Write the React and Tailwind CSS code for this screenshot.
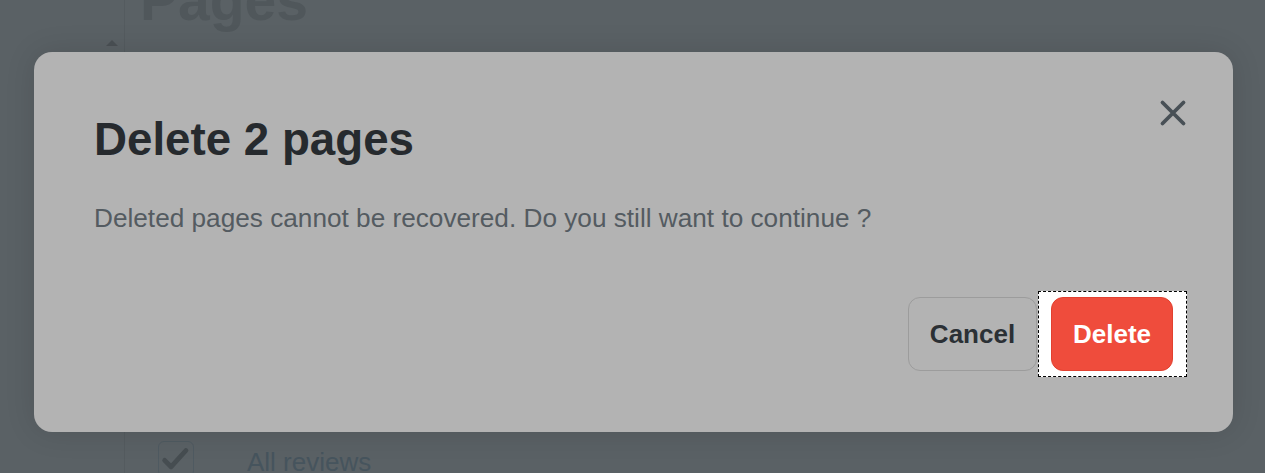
import React from "react";

export default function App() {
    return (
        <div
            className="relative w-full h-[473px] overflow-hidden bg-[#5a6165]"
            style={{ fontFamily: '"Liberation Sans", Arial, sans-serif' }}
        >
            {/* dimmed page behind the dialog */}
            <div className="flex h-full">
                <div className="w-[125px] shrink-0 border-r border-[#545b5f] relative">
                    <div className="absolute left-[106px] top-[40px] w-0 h-0 border-l-[6px] border-r-[6px] border-b-[6px] border-l-transparent border-r-transparent border-b-[#4a5054]"></div>
                </div>
                <div className="flex-1 flex flex-col justify-between pl-[15px]">
                    <h1 className="text-[57px] font-bold leading-[57px] text-[#50575b] -mt-[28px]">
                        Pages
                    </h1>
                    <div className="flex items-start gap-[53px] pl-[18px] -mb-[4px]">
                        <div className="w-[36px] h-[36px] rounded-[6px] border border-[#4f5a61] flex items-center justify-center">
                            <svg width="34" height="34" viewBox="0 0 24 24" fill="none" stroke="#464d51" strokeWidth="3.4" strokeLinecap="round" strokeLinejoin="round">
                                <path d="M4 13l4.5 4.5L19 6" />
                            </svg>
                        </div>
                        <span className="text-[26px] text-[#46545d] leading-[26px] mt-[8px]">All reviews</span>
                    </div>
                </div>
            </div>

            {/* dialog */}
            <div className="absolute left-[34px] top-[52px] w-[1199px] h-[380px] rounded-[18px] bg-[#b3b3b3] shadow-[0_0_30px_rgba(0,0,0,0.12)] pl-[60px] pr-[46px] pt-[65px] flex flex-col">
                <button className="absolute right-[46px] top-[47px] w-[28px] h-[28px] flex items-center justify-center">
                    <svg width="28" height="28" viewBox="0 0 28 28" fill="none" stroke="#485056" strokeWidth="3.8" strokeLinecap="round">
                        <path d="M3.5 3.5L24.5 24.5M24.5 3.5L3.5 24.5" />
                    </svg>
                </button>
                <h2 className="text-[45.7px] font-bold leading-[45px] text-[#262a2e]">Delete 2 pages</h2>
                <p className="mt-[43px] text-[26.2px] leading-[26px] text-[#545b61]">
                    Deleted pages cannot be recovered. Do you still want to continue ?
                </p>
                <div className="flex justify-end items-center gap-[1px] mt-[60px]">
                    <button className="w-[129px] h-[74px] rounded-[12px] border border-[#9c9c9c] text-[26px] font-bold text-[#2b3035]">
                        Cancel
                    </button>
                    <div className="bg-white border border-dashed border-black w-[149px] h-[86px] flex items-center justify-center pr-[1px]">
                        <button className="w-[122px] h-[74px] rounded-[12px] bg-[#ef4c3c] border border-[#e2402f] text-[26px] font-bold text-white">
                            Delete
                        </button>
                    </div>
                </div>
            </div>
        </div>
    );
}
